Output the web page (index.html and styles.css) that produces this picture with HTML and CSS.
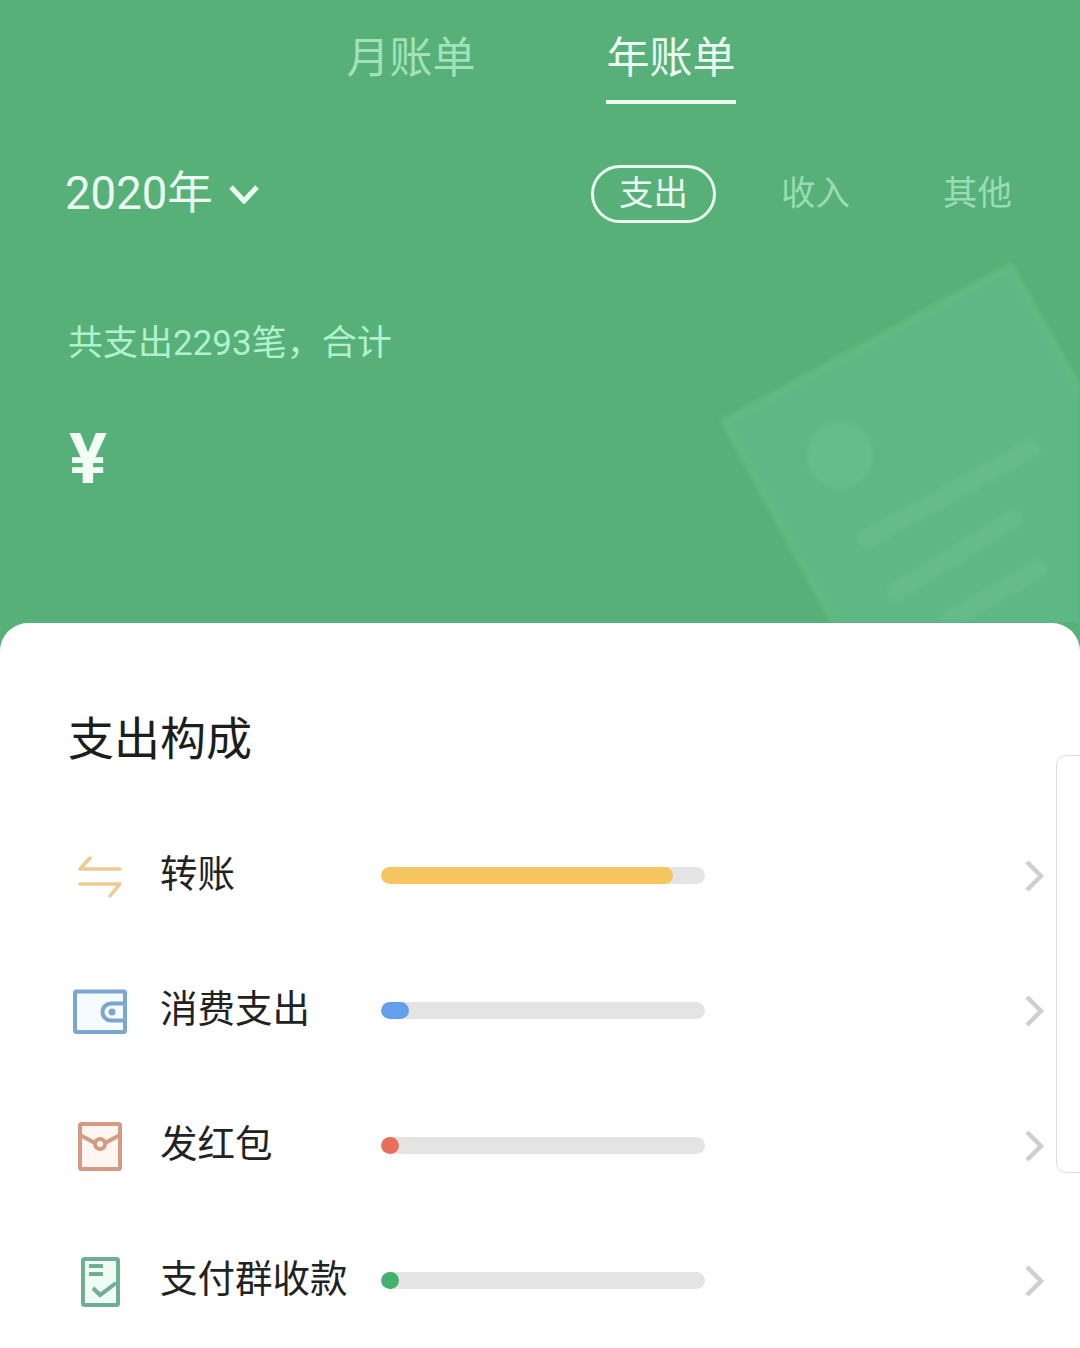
FILE: index.html
```html
<!DOCTYPE html>
<html lang="zh-CN">
<head>
<meta charset="utf-8">
<title>年账单</title>
<link rel="stylesheet" href="styles.css">
</head>
<body>
<div class="page">
  <header class="hero">
    <svg class="hero-art" width="1080" height="623" viewBox="0 0 1080 623" aria-hidden="true">
      <path class="art-sheet" d="M725 422 L1010 267 L1180 570 L892 727 Z"/>
      <circle class="art-mark" cx="840" cy="455" r="33"/>
      <path class="art-line" d="M1030 449 L867 539"/>
      <path class="art-line" d="M1013 519 L897 591"/>
      <path class="art-line" d="M1037 569 L950 620"/>
    </svg>
    <nav class="tabs">
      <span class="tab">月账单</span>
      <span class="tab tab-active">年账单</span>
    </nav>
    <div class="filter-row">
      <div class="year">
        <span>2020年</span>
        <svg class="year-arrow" width="30" height="20" viewBox="0 0 30 20" aria-hidden="true"><path d="M2 3 L15 17 L28 3"/></svg>
      </div>
      <div class="filters">
        <span class="filter filter-active">支出</span>
        <span class="filter">收入</span>
        <span class="filter">其他</span>
      </div>
    </div>
    <p class="summary">共支出2293笔，合计</p>
    <p class="amount">¥</p>
  </header>

  <main class="card">
    <h1 class="card-title">支出构成</h1>
    <ul class="rows">
      <li class="row">
        <svg class="row-icon icon-transfer" width="60" height="60" viewBox="0 0 60 60" aria-hidden="true">
          <path d="M10 23 L50 23 M10 23 L20 12 M10 38 L50 38 M50 38 L40 50"/>
        </svg>
        <span class="row-label">转账</span>
        <span class="bar"><span class="bar-fill fill-yellow" style="width:90%"></span></span>
        <svg class="row-arrow" width="24" height="34" viewBox="0 0 24 34" aria-hidden="true"><path d="M4 3 L18 17 L4 31"/></svg>
      </li>
      <li class="row">
        <svg class="row-icon icon-wallet" width="60" height="60" viewBox="0 0 60 60" aria-hidden="true">
          <rect x="5" y="10.5" width="50" height="40.5" rx="1.5"/>
          <path d="M55 22.5 L41 22.5 A8.5 8.5 0 0 0 41 39.5 L55 39.5"/>
          <circle class="wallet-dot" cx="42" cy="31" r="3.5"/>
        </svg>
        <span class="row-label">消费支出</span>
        <span class="bar"><span class="bar-fill fill-blue" style="width:28px"></span></span>
        <svg class="row-arrow" width="24" height="34" viewBox="0 0 24 34" aria-hidden="true"><path d="M4 3 L18 17 L4 31"/></svg>
      </li>
      <li class="row">
        <svg class="row-icon icon-packet" width="60" height="60" viewBox="0 0 60 60" aria-hidden="true">
          <rect x="10" y="8" width="40" height="45" rx="1.5"/>
          <path d="M10 19 L25 27 M35 27 L50 19"/>
          <circle cx="30" cy="28" r="5"/>
        </svg>
        <span class="row-label">发红包</span>
        <span class="bar"><span class="bar-fill fill-red" style="width:18px"></span></span>
        <svg class="row-arrow" width="24" height="34" viewBox="0 0 24 34" aria-hidden="true"><path d="M4 3 L18 17 L4 31"/></svg>
      </li>
      <li class="row">
        <svg class="row-icon icon-doc" width="60" height="60" viewBox="0 0 60 60" aria-hidden="true">
          <rect x="13" y="8" width="35" height="46" rx="1.5"/>
          <path d="M19 15 L33 15 M19 23 L33 23 M23 37 L30 44 L46 32"/>
        </svg>
        <span class="row-label">支付群收款</span>
        <span class="bar"><span class="bar-fill fill-green" style="width:18px"></span></span>
        <svg class="row-arrow" width="24" height="34" viewBox="0 0 24 34" aria-hidden="true"><path d="M4 3 L18 17 L4 31"/></svg>
      </li>
    </ul>
    <div class="side-drawer"></div>
  </main>
</div>
</body>
</html>
```

FILE: styles.css
```css
* {
  box-sizing: border-box;
}

html,
body {
  margin: 0;
  padding: 0;
}

body {
  font-family: "Roboto", "Noto Sans CJK SC", sans-serif;
}

.page {
  position: relative;
  width: 1080px;
  height: 1348px;
  overflow: hidden;
  background: #57b078;
}

/* Green summary area */
.hero {
  position: relative;
  height: 623px;
  overflow: hidden;
}

.hero-art {
  position: absolute;
  left: 0;
  top: 0;
  filter: blur(2px);
}

.art-sheet {
  fill: #5db886;
  stroke: #60bb80;
  stroke-width: 8;
  stroke-linejoin: round;
}

.art-mark {
  fill: #66bd8c;
}

.art-line {
  fill: none;
  stroke: #65bc8a;
  stroke-width: 20;
  stroke-linecap: round;
}

.tabs {
  position: relative;
  display: flex;
  justify-content: center;
  gap: 130px;
  padding: 28px 0 0 2px;
}

.tab {
  width: 130px;
  padding-bottom: 12px;
  border-bottom: 4px solid transparent;
  font-size: 43px;
  line-height: 60px;
  text-align: center;
  color: #a2e2b9;
}

.tab-active {
  color: #eafbf1;
  border-bottom-color: #eafbf1;
}

.filter-row {
  position: relative;
  display: flex;
  align-items: center;
  justify-content: space-between;
  margin-top: 61px;
  padding: 0 40px 0 65px;
}

.year {
  display: flex;
  align-items: center;
  gap: 16px;
  font-size: 45.5px;
  line-height: 58px;
  color: #eafbf1;
}

.year-arrow path {
  fill: none;
  stroke: #eafbf1;
  stroke-width: 5;
}

.filters {
  display: flex;
  gap: 37px;
}

.filter {
  width: 125px;
  height: 58px;
  border: 3px solid transparent;
  border-radius: 29px;
  font-size: 34.5px;
  line-height: 50px;
  text-align: center;
  color: #9bdcb3;
}

.filter-active {
  border-color: #eafbf1;
  color: #eafbf1;
}

.summary {
  position: relative;
  margin: 97px 0 0;
  padding-left: 68px;
  font-size: 35px;
  line-height: 48px;
  color: #b2f1cd;
}

.amount {
  position: relative;
  margin: 55px 0 0;
  padding-left: 69px;
  font-size: 71px;
  font-weight: 700;
  line-height: 72px;
  color: #f2fdf7;
}

/* White breakdown card */
.card {
  position: relative;
  height: 725px;
  padding-top: 86px;
  background: #fff;
  border-radius: 28px 28px 0 0;
}

.card-title {
  margin: 0 0 39px;
  padding-left: 68px;
  font-size: 46px;
  font-weight: 400;
  line-height: 60px;
  color: #1d1d1d;
}

.rows {
  margin: 0;
  padding: 0 0 0 70px;
  list-style: none;
}

.row {
  display: grid;
  grid-template-columns: 90px 221px 324px 1fr;
  align-items: center;
  height: 135px;
}

.row-label {
  padding-bottom: 3px;
  font-size: 37.5px;
  line-height: 50px;
  color: #222;
}

.bar {
  display: block;
  height: 17px;
  border-radius: 9px;
  background: #e4e4e4;
  overflow: hidden;
}

.bar-fill {
  display: block;
  height: 100%;
  border-radius: 9px;
}

.fill-yellow {
  background: #f5c55f;
}

.fill-blue {
  background: #62a0ee;
}

.fill-red {
  background: #e8705a;
}

.fill-green {
  background: #45b06c;
}

.row-arrow {
  justify-self: end;
  margin-right: 33px;
}

.row-arrow path {
  fill: none;
  stroke: #cfcfcf;
  stroke-width: 4.5;
}

.row-icon * {
  fill: none;
  stroke-width: 4;
}

.icon-transfer path {
  stroke: #eccb91;
  stroke-width: 3.5;
  stroke-linecap: round;
}

.icon-wallet rect {
  fill: #f6fbff;
  stroke: #7aa6cf;
}

.icon-wallet path {
  stroke: #7aa6cf;
}

.icon-wallet .wallet-dot {
  fill: #7aa6cf;
  stroke: none;
}

.icon-packet rect {
  fill: #fff6f2;
}

.icon-packet * {
  stroke: #d39a84;
}

.icon-doc rect {
  fill: #effbf6;
}

.icon-doc * {
  stroke: #6fae94;
}

/* Edge of the panel peeking in from the right */
.side-drawer {
  position: absolute;
  top: 132px;
  right: -12px;
  width: 36px;
  height: 418px;
  border: 1px solid #dcdcdc;
  border-radius: 10px;
  background: #fff;
}
```
